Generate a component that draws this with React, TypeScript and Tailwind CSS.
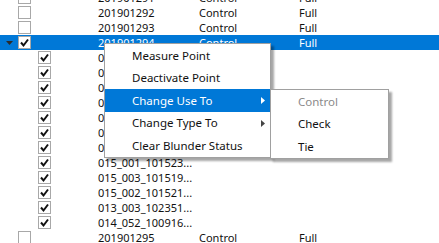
import React from "react";

type Row = {
  id: string;
  use?: string;
  type?: string;
  level: 0 | 1;
  checked: boolean;
  selected?: boolean;
  expanded?: boolean;
};

const ROWS: Row[] = [
  { id: "201901291", use: "Control", type: "Full", level: 0, checked: false },
  { id: "201901292", use: "Control", type: "Full", level: 0, checked: false },
  { id: "201901293", use: "Control", type: "Full", level: 0, checked: false },
  { id: "201901294", use: "Control", type: "Full", level: 0, checked: true, selected: true, expanded: true },
  { id: "014_051_100912...", level: 1, checked: true },
  { id: "014_050_100908...", level: 1, checked: true },
  { id: "013_002_102347...", level: 1, checked: true },
  { id: "013_001_102344...", level: 1, checked: true },
  { id: "012_004_101130...", level: 1, checked: true },
  { id: "012_003_101127...", level: 1, checked: true },
  { id: "015_004_101526...", level: 1, checked: true },
  { id: "015_001_101523...", level: 1, checked: true },
  { id: "015_003_101519...", level: 1, checked: true },
  { id: "015_002_101521...", level: 1, checked: true },
  { id: "013_003_102351...", level: 1, checked: true },
  { id: "014_052_100916...", level: 1, checked: true },
  { id: "201901295", use: "Control", type: "Full", level: 0, checked: false },
];

const CheckBox = ({ checked }: { checked: boolean }) => (
  <div className="w-[13px] h-[13px] border border-[#a8a8a8] bg-white flex items-center justify-center shrink-0">
    {checked && (
      <svg width="11" height="11" viewBox="0 0 11 11">
        <path d="M2 5.5 L4.5 8.5 L9 2.5" fill="none" stroke="#111" strokeWidth="2" />
      </svg>
    )}
  </div>
);

const Arrow = ({ color }: { color: string }) => (
  <svg width="4" height="7" viewBox="0 0 4 7">
    <path d="M0 0 L4 3.5 L0 7 Z" fill={color} />
  </svg>
);

const MENU = ["Measure Point", "Deactivate Point", "Change Use To", "Change Type To", "Clear Blunder Status"];
const SUBMENU = ["Control", "Check", "Tie"];

export default function App() {
  return (
    <div className="relative w-[439px] h-[243px] overflow-hidden bg-white font-['Noto_Sans','Open_Sans',sans-serif] text-[11px] text-[#111]">
      <div className="-mt-[10px]">
        {ROWS.map((r) => (
          <div
            key={r.id}
            className={`flex items-center h-[15px] ${r.selected ? "bg-[#0078d7] text-white" : ""}`}
          >
            <div className={`w-[98px] flex items-center ${r.level === 1 ? "pl-[38px]" : ""}`}>
              {r.level === 0 && (
                <div className="w-[18px] flex items-center justify-center">
                  {r.expanded && (
                    <svg width="7" height="4" viewBox="0 0 7 4">
                      <path d="M0 0 L7 0 L3.5 4 Z" fill="#2b2b2b" />
                    </svg>
                  )}
                </div>
              )}
              <CheckBox checked={r.checked} />
            </div>
            <div className="w-[101px] leading-[15px] whitespace-nowrap">{r.id}</div>
            <div className="w-[100px] leading-[15px]">{r.use}</div>
            <div className="flex-1 leading-[15px]">{r.type}</div>
          </div>
        ))}
      </div>

      {/* context menu */}
      <div className="absolute left-[104px] top-[43px] w-[167px] border border-[#a0a0a0] bg-white shadow-[3px_3px_2px_rgba(0,0,0,0.35)] text-[11.5px] text-[#111]">
        {MENU.map((m, i) => {
          const hot = i === 2;
          const sub = i === 2 || i === 3;
          return (
            <div
              key={m}
              className={`flex items-center h-[22.6px] pl-[27px] pr-[5px] ${hot ? "bg-[#0078d7] text-white" : ""}`}
            >
              <span className="flex-1 whitespace-nowrap">{m}</span>
              {sub && <Arrow color={hot ? "#ffffff" : "#444444"} />}
            </div>
          );
        })}
      </div>

      {/* submenu */}
      <div className="absolute left-[270px] top-[89px] w-[119px] border border-[#a0a0a0] bg-white shadow-[3px_3px_2px_rgba(0,0,0,0.35)] text-[11.5px] text-[#111]">
        {SUBMENU.map((s, i) => (
          <div
            key={s}
            className={`flex items-center h-[22.6px] pl-[27px] ${i === 0 ? "text-[#8a8a8a]" : ""}`}
          >
            {s}
          </div>
        ))}
      </div>
    </div>
  );
}
